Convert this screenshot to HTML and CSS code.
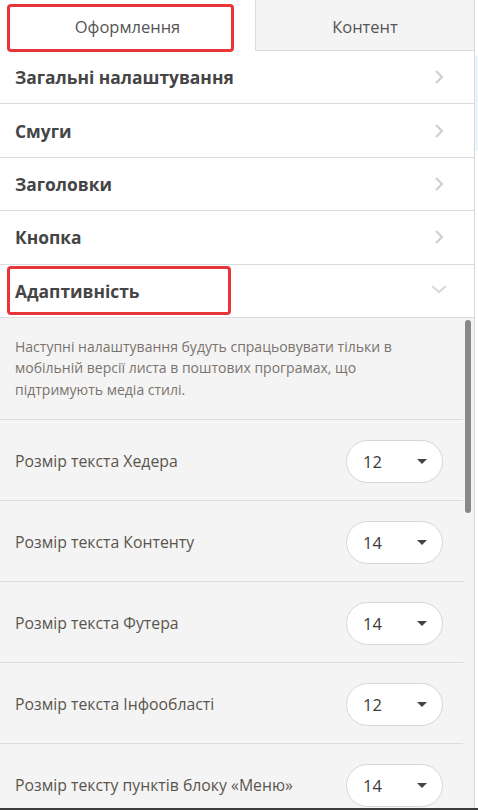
FILE: index.html
```html
<!DOCTYPE html>
<html lang="uk">
<head>
<meta charset="utf-8">
<link rel="stylesheet" href="styles.css">
</head>
<body>
<div class="frame">
  <div class="panel">
    <div class="tabs">
      <div class="tab active">Оформлення<span class="mark mark-tab"></span></div>
      <div class="tab">Контент</div>
    </div>
    <div class="menu">
      <div class="menu-row"><span class="menu-title">Загальні налаштування</span>
        <svg class="chev" width="10" height="16" viewBox="0 0 10 16"><path d="M2 2l6 6-6 6" fill="none" stroke="#cfcfcf" stroke-width="2.2"/></svg></div>
      <div class="menu-row"><span class="menu-title">Смуги</span>
        <svg class="chev" width="10" height="16" viewBox="0 0 10 16"><path d="M2 2l6 6-6 6" fill="none" stroke="#cfcfcf" stroke-width="2.2"/></svg></div>
      <div class="menu-row"><span class="menu-title">Заголовки</span>
        <svg class="chev" width="10" height="16" viewBox="0 0 10 16"><path d="M2 2l6 6-6 6" fill="none" stroke="#cfcfcf" stroke-width="2.2"/></svg></div>
      <div class="menu-row"><span class="menu-title">Кнопка</span>
        <svg class="chev" width="10" height="16" viewBox="0 0 10 16"><path d="M2 2l6 6-6 6" fill="none" stroke="#cfcfcf" stroke-width="2.2"/></svg></div>
      <div class="menu-row open"><span class="menu-title">Адаптивність</span><span class="mark mark-row"></span>
        <svg class="chev-down" width="18" height="10" viewBox="0 0 18 10"><path d="M2 2l7 6 7-6" fill="none" stroke="#dadada" stroke-width="2.2"/></svg></div>
    </div>
    <div class="scroll">
      <div class="content">
        <p class="desc">Наступні налаштування будуть спрацьовувати тільки в мобільній версії листа в поштових програмах, що підтримують медіа стилі.</p>
        <div class="setting"><span class="label">Розмір текста Хедера</span><div class="select"><span>12</span><span class="caret"></span></div></div>
        <div class="setting"><span class="label">Розмір текста Контенту</span><div class="select"><span>14</span><span class="caret"></span></div></div>
        <div class="setting"><span class="label">Розмір текста Футера</span><div class="select"><span>14</span><span class="caret"></span></div></div>
        <div class="setting"><span class="label">Розмір текста Інфообласті</span><div class="select"><span>12</span><span class="caret"></span></div></div>
        <div class="setting"><span class="label">Розмір тексту пунктів блоку «Меню»</span><div class="select"><span>14</span><span class="caret"></span></div></div>
      </div>
      <div class="track"><div class="thumb"></div></div>
    </div>
  </div>
  <div class="edge"></div>
</div>
</body>
</html>
```

FILE: styles.css
```css
* { box-sizing: border-box; }
html, body { margin: 0; padding: 0; }
body {
  font-family: "Open Sans", "Noto Sans", sans-serif;
  background: #fff;
  width: 478px;
  height: 810px;
  overflow: hidden;
}
.frame {
  display: flex;
  height: 810px;
  border-bottom: 2px solid #3c3c3c;
}
.panel {
  width: 475px;
  border-right: 1px solid #d8d8d8;
  display: flex;
  flex-direction: column;
  overflow: hidden;
}
.edge {
  flex: 1;
  background: linear-gradient(#fff 0, #fff 55px, #eaf7f8 56px, #eaf7f8 150px, #fff 151px);
}
.tabs {
  display: flex;
  height: 51px;
  flex: none;
}
.tab {
  position: relative;
  display: flex;
  align-items: center;
  justify-content: center;
  font-size: 16.5px;
  color: #555;
  padding-top: 2px;
}
.tab.active {
  width: 255px;
  background: #fff;
}
.tab:not(.active) {
  flex: 1;
  background: #f4f4f4;
  border-left: 1px solid #dcdcdc;
  border-bottom: 1px solid #dcdcdc;
}
.mark {
  position: absolute;
  border: 3px solid #e8353a;
  border-radius: 4px;
  pointer-events: none;
}
.mark-tab { left: 7px; top: 4px; width: 227px; height: 48px; }
.menu { flex: none; }
.menu-row {
  position: relative;
  height: 53.4px;
  border-bottom: 1px solid #dcdcdc;
  display: flex;
  align-items: center;
  justify-content: space-between;
  padding: 0 28px 0 15px;
}
.menu-title {
  font-size: 17.4px;
  font-weight: 700;
  color: #454545;
}
.mark-row { left: 7px; top: 1px; width: 224px; height: 49px; }
.chev { margin-right: 2px; }
.chev-down { margin-right: -2px; margin-top: -4px; }
.scroll {
  flex: 1;
  display: flex;
  background: #f4f4f4;
  min-height: 0;
}
.content { flex: 1; }
.desc {
  margin: 0;
  padding: 18px 40px 19px 15px;
  font-size: 14px;
  line-height: 21.5px;
  color: #7a736d;
  border-bottom: 1px solid #dcdcdc;
}
.setting {
  height: 81px;
  border-bottom: 1px solid #dcdcdc;
  display: flex;
  align-items: center;
  justify-content: space-between;
  padding: 2px 20px 0 15px;
}
.label {
  font-size: 15.8px;
  color: #5a544e;
}
.select {
  width: 97px;
  height: 43px;
  border: 1px solid #d6d6d6;
  border-radius: 22px;
  background: #fff;
  display: flex;
  align-items: center;
  justify-content: space-between;
  padding: 0 15px 0 16px;
  font-size: 16.5px;
  color: #3a3a3a;
}
.caret {
  width: 0;
  height: 0;
  border-left: 5px solid transparent;
  border-right: 5px solid transparent;
  border-top: 5px solid #444;
}
.track {
  width: 11px;
  flex: none;
  padding: 2px 3px 0 2px;
}
.thumb {
  width: 6px;
  height: 193px;
  background: #888;
  border-radius: 3px;
}
```
